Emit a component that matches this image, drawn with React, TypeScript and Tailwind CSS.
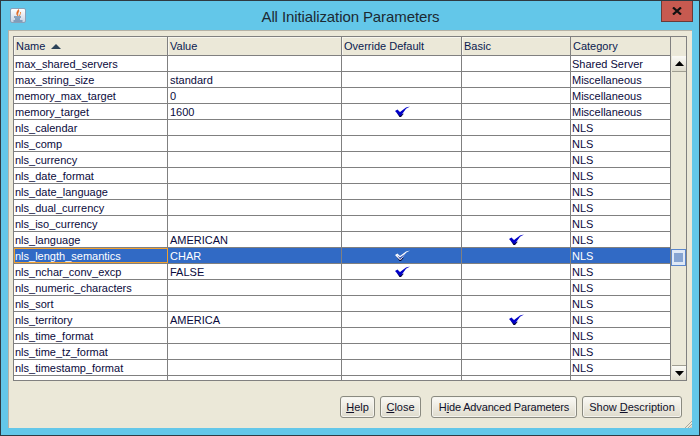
import type { ReactNode } from "react";

const rows: [string, string, boolean, boolean, string][] = [
  ["max_shared_servers", "", false, false, "Shared Server"],
  ["max_string_size", "standard", false, false, "Miscellaneous"],
  ["memory_max_target", "0", false, false, "Miscellaneous"],
  ["memory_target", "1600", true, false, "Miscellaneous"],
  ["nls_calendar", "", false, false, "NLS"],
  ["nls_comp", "", false, false, "NLS"],
  ["nls_currency", "", false, false, "NLS"],
  ["nls_date_format", "", false, false, "NLS"],
  ["nls_date_language", "", false, false, "NLS"],
  ["nls_dual_currency", "", false, false, "NLS"],
  ["nls_iso_currency", "", false, false, "NLS"],
  ["nls_language", "AMERICAN", false, true, "NLS"],
  ["nls_length_semantics", "CHAR", true, false, "NLS"],
  ["nls_nchar_conv_excp", "FALSE", true, false, "NLS"],
  ["nls_numeric_characters", "", false, false, "NLS"],
  ["nls_sort", "", false, false, "NLS"],
  ["nls_territory", "AMERICA", false, true, "NLS"],
  ["nls_time_format", "", false, false, "NLS"],
  ["nls_time_tz_format", "", false, false, "NLS"],
  ["nls_timestamp_format", "", false, false, "NLS"],
];

function Check({ selected }: { selected: boolean }) {
  return (
    <svg width="16" height="12" viewBox="0 0 16 12" className="block">
      <path d="M5.5 11 L7 11 L10 7.5 L6 9 L2.5 6.5 Z" fill="#000030" />
      <path d="M1 5 L3.5 3.5 L6 6 L12 1.5 L16 0.5 L12 2.8 L7 9.8 L5.5 9.8 Z" fill={selected ? "#ffffff" : "#0000c8"} />
      {selected && <path d="M3.2 5.2 L6 7.6 L11.5 3.4 L6.8 8.8 L5.7 8.8 Z" fill="#2040a8" />}
    </svg>
  );
}

function Row({ r }: { r: [string, string, boolean, boolean, string] }) {
  const sel = r[0] === "nls_length_semantics";
  const text = sel ? "text-white bg-[#316ac5]" : "text-[#0a0a3c] bg-white";
  return (
    <div className={`flex h-4 shrink-0 border-b border-[#808080] leading-[17px] ${text}`}>
      <div className={`w-[154px] shrink-0 pl-px border-r border-[#808080] whitespace-nowrap ${sel ? "outline outline-1 -outline-offset-1 outline-[#f0a030]" : ""}`}>{r[0]}</div>
      <div className="w-[174px] shrink-0 pl-0.5 border-r border-[#808080] whitespace-nowrap">{r[1]}</div>
      <div className="w-[120px] shrink-0 border-r border-[#808080] flex items-center justify-center">{r[2] && <Check selected={sel} />}</div>
      <div className="w-[109px] shrink-0 border-r border-[#808080] flex items-center justify-center">{r[3] && <Check selected={sel} />}</div>
      <div className="w-[100px] shrink-0 pl-px whitespace-nowrap">{r[4]}</div>
    </div>
  );
}

function Btn({ children, w }: { children: ReactNode; w: string }) {
  return (
    <div className={`${w} h-[22px] flex items-center justify-center rounded-[3px] border border-[#8a8a80] bg-gradient-to-b from-[#fbfaf6] to-[#dedbcc] text-[#10102a] shadow-[inset_0_0_0_1px_#f5f4ee]`}>
      {children}
    </div>
  );
}

function Head({ w, children }: { w: string; children: ReactNode }) {
  return (
    <div className={`${w} shrink-0 h-full flex items-center pl-0.5 pt-px border-r border-[#808080] whitespace-nowrap text-[#0a1a50] shadow-[inset_1px_1px_0_#f8f6ee]`}>
      {children}
    </div>
  );
}

export default function App() {
  return (
    <div className="w-[700px] h-[436px] overflow-hidden border border-[#2f3a42] bg-[#63c7e9] flex flex-col text-[11px] [font-family:'Liberation_Sans',Arial,sans-serif]">
      <div className="h-[29px] shrink-0 flex items-start">
        <div className="ml-[9px] mt-[7px] w-[16px] h-[15px] rounded-[2px] border border-[#8aa0b8] bg-gradient-to-b from-[#ffffff] to-[#c8d4e4] flex items-center justify-center">
          <svg width="12" height="13" viewBox="0 0 12 13">
            <path d="M6.5 0.5 C8 3 4.5 4 6 7 C4 5.5 4.5 3 6.5 0.5 Z" fill="#e0641c" stroke="#e0641c" strokeWidth="0.6" />
            <path d="M8.5 3 C9 5 7.5 5.5 7.5 7" stroke="#e88a3c" strokeWidth="1" fill="none" />
            <path d="M2 8 H9 M3 10 H8 M1.5 12 H10.5" stroke="#34628f" strokeWidth="1.1" fill="none" />
          </svg>
        </div>
        <div className="flex-1 text-center text-[15px] tracking-[-0.1px] leading-[31px] text-[#1c2a33] pl-[14px]">All Initialization Parameters</div>
        <div className="mr-[6px] w-[32px] h-[21px] bg-[#c75a50] border border-[#6a3a38] border-t-0 flex items-center justify-center">
          <svg width="10" height="8" viewBox="0 0 10 8">
            <path d="M1 0.5 L9 7.5 M9 0.5 L1 7.5" stroke="#111" strokeWidth="2.2" />
          </svg>
        </div>
      </div>
      <div className="ml-[7px] mr-[7px] h-[398px] shrink-0 bg-[#ebe8d8] border-t border-l border-[#b5b2a6] flex flex-col pl-[4px] pt-[5px] relative">
        <div className="w-[674px] h-[345px] border border-[#808080] flex overflow-hidden bg-[#ebe8d8]">
          <div className="w-[657px] shrink-0 flex flex-col overflow-hidden border-r border-[#808080]">
            <div className="flex h-[19px] shrink-0 border-b border-[#808080] bg-[#ebe8d8]">
              <Head w="w-[154px]">
                Name
                <svg width="10" height="5" viewBox="0 0 10 5" className="ml-[6px]"><path d="M5 0 L10 5 H0 Z" fill="#2b4258" /></svg>
              </Head>
              <Head w="w-[174px]">Value</Head>
              <Head w="w-[120px]">Override Default</Head>
              <Head w="w-[109px]">Basic</Head>
              <div className="w-[100px] shrink-0 pl-0.5 pt-px flex items-center text-[#0a1a50] whitespace-nowrap">Category</div>
            </div>
            {rows.map((r) => <Row key={r[0]} r={r} />)}
            <div className="flex flex-1 bg-white">
              <div className="w-[154px] shrink-0 border-r border-[#808080]" />
              <div className="w-[174px] shrink-0 border-r border-[#808080]" />
              <div className="w-[120px] shrink-0 border-r border-[#808080]" />
              <div className="w-[109px] shrink-0 border-r border-[#808080]" />
            </div>
          </div>
          <div className="flex-1 flex flex-col relative pl-px">
            <div className="h-[19px] shrink-0" />
            <div className="h-[16px] shrink-0 bg-gradient-to-b from-[#fbfaf6] to-[#dedbcc] flex items-center justify-center border-b border-[#a09e92]">
              <svg width="9" height="5" viewBox="0 0 9 5"><path d="M4.5 0 L9 5 H0 Z" fill="#000" /></svg>
            </div>
            <div className="flex-1" />
            <div className="absolute left-0 top-[212px] w-[15px] h-[17px] bg-[#dfe8f6] border border-[#5b86cc] flex items-center justify-center">
              <div className="w-[9px] h-[9px] bg-[radial-gradient(#7f9fd0_0.7px,transparent_0.8px)] [background-size:2px_2px]" />
            </div>
            <div className="h-[15px] shrink-0 bg-gradient-to-b from-[#fbfaf6] to-[#dedbcc] flex items-center justify-center border-t border-[#a09e92]">
              <svg width="9" height="5" viewBox="0 0 9 5"><path d="M0 0 H9 L4.5 5 Z" fill="#000" /></svg>
            </div>
          </div>
        </div>
        <div className="flex justify-end gap-[5px] mt-[15px] pr-[10px] items-center">
          <Btn w="w-[35px]"><span><u>H</u>elp</span></Btn>
          <Btn w="w-[41px]"><span><u>C</u>lose</span></Btn>
          <div className="ml-[5px]"><Btn w="w-[146px]"><span className="tracking-[-0.15px]">H<u>i</u>de Advanced Parameters</span></Btn></div>
          <Btn w="w-[100px]"><span>Show <u>D</u>escription</span></Btn>
        </div>
        <svg width="7" height="7" viewBox="0 0 7 7" className="absolute right-0 bottom-0">
          <path d="M7 0 L0 7 M7 3 L3 7 M7 5.5 L5.5 7" stroke="#a8a79c" strokeWidth="1" fill="none" />
        </svg>
      </div>
    </div>
  );
}
